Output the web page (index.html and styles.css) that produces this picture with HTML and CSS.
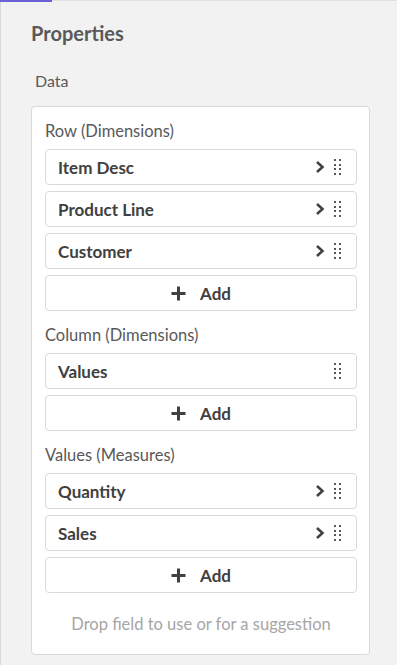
FILE: index.html
```html
<!DOCTYPE html>
<html lang="en">
<head>
    <meta charset="UTF-8">
    <meta name="viewport" content="width=device-width, initial-scale=1.0">
    <title>Properties</title>
    <link rel="stylesheet" href="styles.css">
</head>
<body>
    <div class="panel">
        <div class="panel-accent"></div>
        <h1 class="panel-title">Properties</h1>
        <div class="section-label">Data</div>

        <div class="data-card">
            <!-- Rows -->
            <div class="group">
                <div class="group-label">Row (Dimensions)</div>
                <div class="field">
                    <span class="field-name">Item Desc</span>
                    <span class="field-icons">
                        <svg class="chevron" width="10" height="12" viewBox="0 0 10 12"><path d="M2 1 L7.5 6 L2 11" fill="none" stroke="#404040" stroke-width="2.5"/></svg>
                        <span class="grip"><i></i><i></i><i></i><i></i><i></i><i></i><i></i><i></i></span>
                    </span>
                </div>
                <div class="field">
                    <span class="field-name">Product Line</span>
                    <span class="field-icons">
                        <svg class="chevron" width="10" height="12" viewBox="0 0 10 12"><path d="M2 1 L7.5 6 L2 11" fill="none" stroke="#404040" stroke-width="2.5"/></svg>
                        <span class="grip"><i></i><i></i><i></i><i></i><i></i><i></i><i></i><i></i></span>
                    </span>
                </div>
                <div class="field">
                    <span class="field-name">Customer</span>
                    <span class="field-icons">
                        <svg class="chevron" width="10" height="12" viewBox="0 0 10 12"><path d="M2 1 L7.5 6 L2 11" fill="none" stroke="#404040" stroke-width="2.5"/></svg>
                        <span class="grip"><i></i><i></i><i></i><i></i><i></i><i></i><i></i><i></i></span>
                    </span>
                </div>
                <button class="add-button">
                    <svg width="15" height="15" viewBox="0 0 15 15"><path d="M7.5 0.5 V14.5 M0.5 7.5 H14.5" stroke="#404040" stroke-width="3"/></svg>
                    <span>Add</span>
                </button>
            </div>

            <!-- Columns -->
            <div class="group">
                <div class="group-label">Column (Dimensions)</div>
                <div class="field">
                    <span class="field-name">Values</span>
                    <span class="field-icons">
                        <span class="grip"><i></i><i></i><i></i><i></i><i></i><i></i><i></i><i></i></span>
                    </span>
                </div>
                <button class="add-button">
                    <svg width="15" height="15" viewBox="0 0 15 15"><path d="M7.5 0.5 V14.5 M0.5 7.5 H14.5" stroke="#404040" stroke-width="3"/></svg>
                    <span>Add</span>
                </button>
            </div>

            <!-- Measures -->
            <div class="group group-last">
                <div class="group-label">Values (Measures)</div>
                <div class="field">
                    <span class="field-name">Quantity</span>
                    <span class="field-icons">
                        <svg class="chevron" width="10" height="12" viewBox="0 0 10 12"><path d="M2 1 L7.5 6 L2 11" fill="none" stroke="#404040" stroke-width="2.5"/></svg>
                        <span class="grip"><i></i><i></i><i></i><i></i><i></i><i></i><i></i><i></i></span>
                    </span>
                </div>
                <div class="field">
                    <span class="field-name">Sales</span>
                    <span class="field-icons">
                        <svg class="chevron" width="10" height="12" viewBox="0 0 10 12"><path d="M2 1 L7.5 6 L2 11" fill="none" stroke="#404040" stroke-width="2.5"/></svg>
                        <span class="grip"><i></i><i></i><i></i><i></i><i></i><i></i><i></i><i></i></span>
                    </span>
                </div>
                <button class="add-button">
                    <svg width="15" height="15" viewBox="0 0 15 15"><path d="M7.5 0.5 V14.5 M0.5 7.5 H14.5" stroke="#404040" stroke-width="3"/></svg>
                    <span>Add</span>
                </button>
            </div>

            <div class="drop-hint">Drop field to use or for a suggestion</div>
        </div>
    </div>
</body>
</html>
```

FILE: styles.css
```css
* {
    margin: 0;
    padding: 0;
    box-sizing: border-box;
}

body {
    font-family: 'Lato', sans-serif;
    background: #f2f2f2;
    color: #404040;
    width: 397px;
    height: 665px;
    overflow: hidden;
}

.panel {
    position: relative;
    height: 665px;
    border-left: 1px solid #d9d9d9;
    border-top: 1px solid #e0e0e0;
    padding: 0 27px 0 30px;
}

.panel-accent {
    position: absolute;
    top: -1px;
    left: -1px;
    width: 52px;
    height: 2px;
    background: #6d5fd8;
}

.panel-title {
    font-size: 20px;
    font-weight: 700;
    color: #595959;
    line-height: 24px;
    margin-top: 20px;
}

.section-label {
    font-size: 16px;
    color: #595959;
    line-height: 20px;
    margin-top: 26px;
    padding-left: 4px;
}

.data-card {
    margin-top: 15px;
    background: #ffffff;
    border: 1px solid #d9d9d9;
    border-radius: 4px;
    padding: 14px 12px 20px 13px;
}

.group {
    display: flex;
    flex-direction: column;
    gap: 6px;
    margin-bottom: 14px;
}

.group-last {
    margin-bottom: 0;
}

.group-label {
    font-size: 16.5px;
    color: #595959;
    line-height: 20px;
    margin-bottom: 2px;
}

.field,
.add-button {
    height: 36px;
    border: 1px solid #d9d9d9;
    border-radius: 4px;
    background: #ffffff;
    display: flex;
    align-items: center;
}

.field {
    justify-content: space-between;
    padding: 0 15px 0 12px;
}

.field-name {
    font-size: 17px;
    font-weight: 700;
    color: #404040;
}

.field-icons {
    display: flex;
    align-items: center;
    gap: 9px;
}

.grip {
    display: grid;
    grid-template-columns: 2px 2px;
    column-gap: 3px;
    row-gap: 2.5px;
}

.grip i {
    width: 2px;
    height: 2px;
    background: #595959;
}

.add-button {
    justify-content: center;
    gap: 14px;
    font-family: 'Lato', sans-serif;
    font-size: 17px;
    font-weight: 700;
    color: #404040;
    cursor: pointer;
}

.drop-hint {
    text-align: center;
    font-size: 16.5px;
    color: #a6a6a6;
    line-height: 20px;
    margin-top: 21px;
}
```
